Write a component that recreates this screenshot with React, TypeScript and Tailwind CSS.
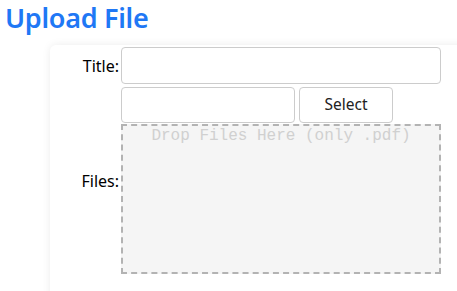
export default function App() {
  return (
    <div className="h-[291px] bg-white font-['Noto_Sans',sans-serif] overflow-hidden">
      <h1 className="pl-[5px] text-[27px] leading-[36px] font-semibold text-[#1f78f5] tracking-[-0.3px]">
        Upload File
      </h1>

      <div className="ml-[50px] mt-[9px] w-[460px] h-[260px] bg-white rounded-tl-md shadow-[0_0_8px_rgba(0,0,0,0.08)] pt-[2px]">
        {/* Title row */}
        <div className="flex items-center">
          <label className="w-[70px] text-right text-[16px] text-black pr-[1px]">Title:</label>
          <input
            type="text"
            className="ml-[1px] w-[320px] h-[37px] border border-[#cccccc] rounded-[4px] outline-none px-2"
          />
        </div>

        {/* Files row */}
        <div className="flex items-center mt-[3px]">
          <label className="w-[70px] text-right text-[16px] text-black pr-[1px]">Files:</label>
          <div className="ml-[1px] w-[320px] flex flex-col">
            <div className="flex gap-[4px]">
              <input
                type="text"
                className="w-[174px] h-[36px] border border-[#cccccc] rounded-[4px] outline-none px-2"
              />
              <button className="w-[94px] h-[36px] border border-[#cccccc] rounded-[4px] bg-white text-[15.5px] text-[#222]">
                Select
              </button>
            </div>
            <div className="mt-[1px] h-[150px] border-2 border-dashed border-[#b3b3b3] bg-[#f5f5f5] text-center font-['Liberation_Mono',monospace] text-[16px] leading-[18px] text-[#d0d0d0] pt-[1px]">
              Drop Files Here (only .pdf)
            </div>
          </div>
        </div>
      </div>
    </div>
  );
}
